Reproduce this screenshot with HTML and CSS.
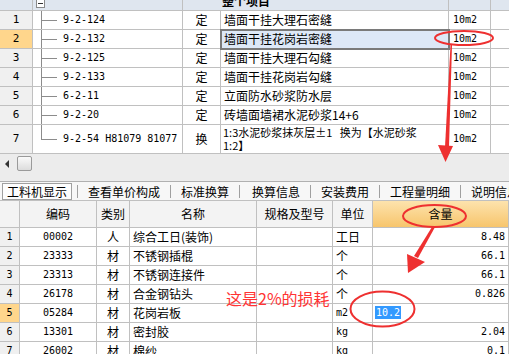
FILE: index.html
```html
<!DOCTYPE html>
<html lang="zh-CN">
<head>
    <meta charset="UTF-8">
    <title>工料机显示</title>
    <link rel="stylesheet" href="styles.css">
</head>
<body>
<div class="app">

    <div class="top">
        <table class="grid">
            <colgroup>
                <col style="width:33px"><col style="width:150px"><col style="width:38px">
                <col style="width:228px"><col style="width:42px"><col style="width:49px">
            </colgroup>
            <tr class="head">
                <td></td>
                <td class="fold-cell"><span class="fold"></span></td>
                <td colspan="2" class="title">整个项目</td>
                <td></td>
                <td></td>
            </tr>
            <tr>
                <td class="rn">1</td><td class="t n">9-2-124</td><td class="c">定</td>
                <td>墙面干挂大理石密缝</td><td class="n u">10m2</td><td></td>
            </tr>
            <tr>
                <td class="rn on">2</td><td class="t n">9-2-132</td><td class="c">定</td>
                <td class="sel">墙面干挂花岗岩密缝</td><td class="n u">10m2</td><td></td>
            </tr>
            <tr>
                <td class="rn">3</td><td class="t n">9-2-125</td><td class="c">定</td>
                <td>墙面干挂大理石勾缝</td><td class="n u">10m2</td><td></td>
            </tr>
            <tr>
                <td class="rn">4</td><td class="t n">9-2-133</td><td class="c">定</td>
                <td>墙面干挂花岗岩勾缝</td><td class="n u">10m2</td><td></td>
            </tr>
            <tr>
                <td class="rn">5</td><td class="t n">6-2-11</td><td class="c">定</td>
                <td>立面防水砂浆防水层</td><td class="n u">10m2</td><td></td>
            </tr>
            <tr>
                <td class="rn">6</td><td class="t n">9-2-20</td><td class="c">定</td>
                <td>砖墙面墙裙水泥砂浆14+6</td><td class="n u">10m2</td><td></td>
            </tr>
            <tr class="tall">
                <td class="rn">7</td><td class="t last n">9-2-54 H81079 81077</td><td class="c">换</td>
                <td class="wrap">1:3水泥砂浆抹灰层±1&nbsp;&nbsp;&nbsp;换为【水泥砂浆<br>1:2】</td><td class="n u">10m2</td><td></td>
            </tr>
        </table>
    </div>

    <div class="hbar">
        <span class="arrow-left"></span>
        <span class="thumb"></span>
    </div>

    <div class="tabs">
        <span class="tab on">工料机显示</span>
        <span class="tab">查看单价构成</span>
        <span class="tab">标准换算</span>
        <span class="tab wide">换算信息</span>
        <span class="tab">安装费用</span>
        <span class="tab">工程量明细</span>
        <span class="tab">说明信息</span>
    </div>

    <div class="bottom">
        <table class="grid">
            <colgroup>
                <col style="width:20px"><col style="width:77px"><col style="width:33px">
                <col style="width:127px"><col style="width:76px"><col style="width:40px">
                <col style="width:136px">
            </colgroup>
            <tr class="bhead">
                <td></td><td>编码</td><td>类别</td><td>名称</td><td>规格及型号</td><td>单位</td><td class="amt-h">含量</td>
            </tr>
            <tr>
                <td class="rn n">1</td><td class="c n">00002</td><td class="c">人</td><td>综合工日(装饰)</td><td></td><td>工日</td><td class="r n">8.48</td>
            </tr>
            <tr>
                <td class="rn n">2</td><td class="c n">23333</td><td class="c">材</td><td>不锈钢插棍</td><td></td><td>个</td><td class="r n">66.1</td>
            </tr>
            <tr>
                <td class="rn n">3</td><td class="c n">23313</td><td class="c">材</td><td>不锈钢连接件</td><td></td><td>个</td><td class="r n">66.1</td>
            </tr>
            <tr>
                <td class="rn n">4</td><td class="c n">26178</td><td class="c">材</td><td>合金钢钻头</td><td></td><td>个</td><td class="r n">0.826</td>
            </tr>
            <tr>
                <td class="rn n on">5</td><td class="c n">05284</td><td class="c">材</td><td>花岗岩板</td><td></td><td class="n">m2</td><td class="n edit"><span class="hl">10.2</span></td>
            </tr>
            <tr>
                <td class="rn n">6</td><td class="c n">13301</td><td class="c">材</td><td>密封胶</td><td></td><td class="n">kg</td><td class="r n">2.04</td>
            </tr>
            <tr>
                <td class="rn n">7</td><td class="c n">26002</td><td class="c">材</td><td>棉纱</td><td></td><td class="n">kg</td><td class="r n">0.1</td>
            </tr>
        </table>
    </div>

    <!-- red annotations drawn over the screenshot -->
    <svg class="marks" width="509" height="354" viewBox="0 0 509 354">
        <g fill="none" stroke="#ee3030" stroke-width="2">
            <ellipse cx="464" cy="38" rx="29" ry="7"/>
            <ellipse cx="434.5" cy="216" rx="31.5" ry="11"/>
            <ellipse cx="382.5" cy="309" rx="32" ry="17.5"/>
        </g>
        <g fill="#ee3030">
            <polygon points="450.5,45 452,45 449,147 445,147"/>
            <polygon points="438,145 453,146 445.5,162"/>
            <polygon points="432,227 434.5,228 418,258 414,256"/>
            <polygon points="407,254 425,262 408,273"/>
        </g>
    </svg>
    <div class="note">这是2%的损耗</div>

</div>
</body>
</html>
```

FILE: styles.css
```css
* {
    margin: 0;
    padding: 0;
    box-sizing: border-box;
}
body {
    width: 509px;
    height: 354px;
    overflow: hidden;
    background: #fff;
    color: #000;
    font-family: "Noto Sans CJK SC", "Noto Sans", sans-serif;
    font-size: 12px;
}
.app {
    position: relative;
    width: 509px;
    height: 354px;
    overflow: hidden;
}

/* grids */
.grid {
    border-collapse: separate;
    border-spacing: 0;
    table-layout: fixed;
}
.grid td {
    height: 19px;
    padding: 0 0 0 3px;
    border-right: 1px solid #c0c0c0;
    border-bottom: 1px solid #c0c0c0;
    line-height: 14px;
    white-space: nowrap;
    overflow: hidden;
    vertical-align: middle;
}
.grid td.c {
    text-align: center;
    padding: 0;
}
.grid td.r {
    text-align: right;
    padding: 0 3px 0 0;
}
.n {
    font-family: "DejaVu Sans Mono", monospace;
    font-size: 10px;
}
.grid td.rn {
    background: #f0f0f0;
    text-align: center;
    padding: 0;
}
.grid td.rn.on {
    background: #ffd68c;
}

/* top grid */
.top {
    height: 154px;
    overflow: hidden;
}
.top .grid {
    width: 540px;
    margin-top: -8px;
}
.top .rn {
    font-family: "DejaVu Sans Mono", monospace;
    font-size: 11px;
}
.head td {
    background: #dfe6ef;
}
.head .title {
    font-weight: bold;
    padding-left: 39px;
}
.grid td.fold-cell {
    vertical-align: bottom;
    padding: 0 0 2px 3px;
}
.fold {
    display: block;
    width: 9px;
    height: 9px;
    border: 1px solid #8a8a8a;
    background: #fff linear-gradient(#333, #333) center / 5px 1px no-repeat;
}
.grid td.t {
    padding-left: 30px;
    background:
        linear-gradient(#8c8c8c, #8c8c8c) 8px 0 / 1px 100% no-repeat,
        linear-gradient(#8c8c8c, #8c8c8c) 8px 50% / 16px 1px no-repeat;
}
.grid td.t.last {
    background:
        linear-gradient(#8c8c8c, #8c8c8c) 8px 0 / 1px 50% no-repeat,
        linear-gradient(#8c8c8c, #8c8c8c) 8px 50% / 16px 1px no-repeat;
}
.grid td.u {
    padding-left: 4px;
}
.grid td.sel {
    background: #dde8f7;
    outline: 2px solid #7a7a7a;
    outline-offset: -1px;
}
.tall td {
    height: 29px;
}
.grid td.wrap {
    font-size: 11px;
    line-height: 13px;
    padding-left: 2px;
}

/* scroll strip */
.hbar {
    display: flex;
    align-items: center;
    height: 28px;
    padding: 0 0 8px 5px;
    background: #ececec;
    border-bottom: 1px solid #b0b0b0;
}
.arrow-left {
    width: 0;
    height: 0;
    border-top: 4px solid transparent;
    border-bottom: 4px solid transparent;
    border-right: 4px solid #333;
    margin-right: 8px;
}
.thumb {
    width: 15px;
    height: 15px;
    border: 1px solid #9a9a9a;
    border-radius: 2px;
    background: linear-gradient(#fafafa, #dcdcdc);
}

/* tabs */
.tabs {
    display: flex;
    align-items: center;
    height: 18px;
    padding-left: 2px;
    background: #f7f7f7;
    white-space: nowrap;
}
.tab {
    padding: 0 10px;
    border-left: 1px solid #a0a0a0;
    line-height: 13px;
}
.tab.on {
    border: 1px solid #a0a0a0;
    background: #fdfdfd;
    padding: 1px 4px;
    margin-right: 5px;
}
.tab.wide {
    padding-left: 12px;
}

/* bottom grid */
.bottom .grid {
    width: 509px;
    border-top: 1px solid #c0c0c0;
}
.bhead td {
    height: 27px;
    background: #f3f3f3;
    text-align: center;
    padding: 0;
}
.grid td.amt-h {
    background: linear-gradient(#fde3ad, #f7c56c);
}
.grid td.edit {
    padding-left: 2px;
}
.hl {
    background: #3399ff;
    color: #fff;
    padding: 1px 1px;
}

/* annotations */
.marks {
    position: absolute;
    left: 0;
    top: 0;
    pointer-events: none;
}
.note {
    position: absolute;
    left: 226px;
    top: 288px;
    color: #ff3434;
    font-size: 16px;
    line-height: 20px;
    white-space: nowrap;
}
```
